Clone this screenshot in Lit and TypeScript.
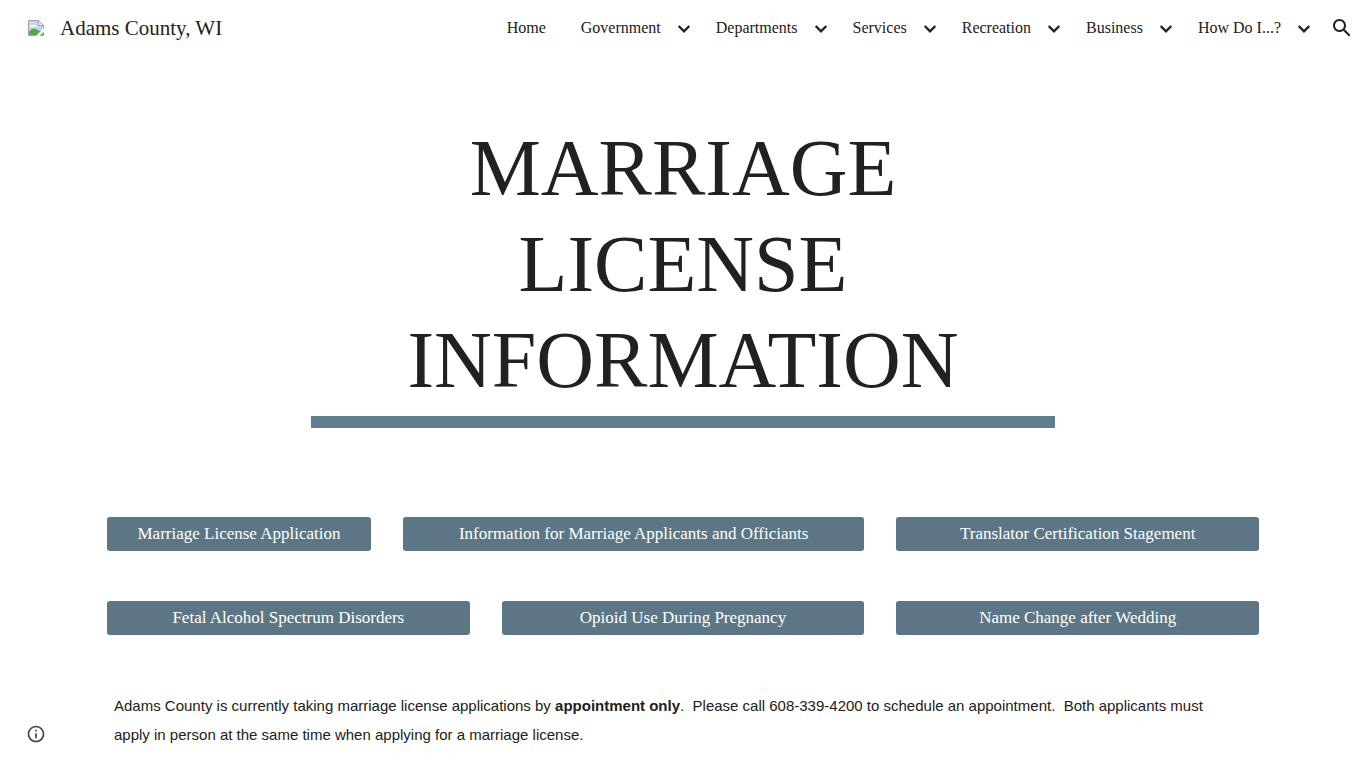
import { LitElement, html, css, svg } from "lit";
import { customElement } from "lit/decorators.js";
import { classMap } from "lit/directives/class-map.js";

interface NavItem {
  label: string;
  menu: boolean;
}

interface Action {
  label: string;
  size: "small" | "medium" | "large";
}

const NAV: NavItem[] = [
  { label: "Home", menu: false },
  { label: "Government", menu: true },
  { label: "Departments", menu: true },
  { label: "Services", menu: true },
  { label: "Recreation", menu: true },
  { label: "Business", menu: true },
  { label: "How Do I...?", menu: true },
];

const ACTIONS: Action[] = [
  { label: "Marriage License Application", size: "small" },
  { label: "Information for Marriage Applicants and Officiants", size: "large" },
  { label: "Translator Certification Stagement", size: "medium" },
  { label: "Fetal Alcohol Spectrum Disorders", size: "medium" },
  { label: "Opioid Use During Pregnancy", size: "medium" },
  { label: "Name Change after Wedding", size: "medium" },
];

const chevron = svg`<path d="M6.700 10 12 15.300 17.300 10" fill="none" stroke="currentColor" stroke-width="2.4" />`;
const search = svg`<path fill="currentColor" d="M20.49 19l-5.73-5.73C15.53 12.2 16 10.91 16 9.5 16 5.91 13.09 3 9.5 3S3 5.91 3 9.5 5.91 16 9.5 16c1.41 0 2.7-.47 3.77-1.24L19 20.49 20.49 19zM5 9.5C5 7.01 7.01 5 9.5 5S14 7.01 14 9.5 11.99 14 9.5 14 5 11.99 5 9.5z" />`;
const info = svg`<path fill="currentColor" d="M11 17h2v-6h-2v6zm1-15C6.48 2 2 6.48 2 12s4.48 10 10 10 10-4.48 10-10S17.52 2 12 2zm0 18c-4.41 0-8-3.59-8-8s3.59-8 8-8 8 3.59 8 8-3.59 8-8 8zM11 9h2V7h-2v2z" />`;

@customElement("site-header")
export class SiteHeader extends LitElement {
  static styles = css`
    :host {
      display: block;
    }
    .bar {
      display: flex;
      align-items: center;
      justify-content: space-between;
      height: 56px;
      padding: 0 12px 0 28px;
    }
    .brand {
      display: flex;
      align-items: center;
      gap: 16px;
      color: #212121;
      font-size: 21px;
      line-height: 24px;
      text-decoration: none;
      white-space: nowrap;
    }
    .logo {
      display: block;
      width: 16px;
      height: 16px;
    }
    .nav,
    .list,
    .item {
      display: flex;
      align-items: center;
    }
    .nav {
      gap: 14px;
    }
    .list {
      gap: 20px;
      margin: 0;
      padding: 0;
      list-style: none;
    }
    .item {
      gap: 11px;
    }
    .plain {
      padding-right: 15px;
    }
    .link {
      color: #212121;
      font-size: 16px;
      line-height: 24px;
      text-decoration: none;
      white-space: nowrap;
    }
    .icon-button {
      display: block;
      width: 24px;
      height: 24px;
      padding: 0;
      border: 0;
      background: none;
      color: #212121;
      cursor: pointer;
    }
    .icon {
      display: block;
      width: 24px;
      height: 24px;
    }
  `;

  render() {
    return html`
      <header class="bar">
        <a class="brand" href="#">
          <svg class="logo" viewBox="0 0 16 16" aria-hidden="true">
            <path d="M.5.5h10l5 5v10H.5z" fill="#c6d5f3" />
            <path d="M2 7c0-2 2-2.500 3-1.500C6 4 8.500 4.500 8.500 7z" fill="#fff" />
            <path d="M1 15v-3c2-3.500 5-4.500 8-2.500l6 3V15z" fill="#58a84c" />
            <path d="M.5.5h10l5 5v10H.5z" fill="none" stroke="#a3a3a3" />
            <path d="M10.500.5v5h5z" fill="#f4f4f4" stroke="#a3a3a3" />
            <path d="M16 8v3.500L11.500 16H8z" fill="#fff" />
          </svg>
          <span>Adams County, WI</span>
        </a>
        <nav class="nav" aria-label="Site">
          <ul class="list">
            ${NAV.map(
              (n) => html`<li class=${classMap({ item: true, plain: !n.menu })}>
                <a class="link" href="#">${n.label}</a>
                ${n.menu
                  ? html`<button class="icon-button" aria-label="Expand ${n.label}">
                      <svg class="icon" viewBox="0 0 24 24">${chevron}</svg>
                    </button>`
                  : null}
              </li>`
            )}
          </ul>
          <button class="icon-button" aria-label="Open search bar">
            <svg class="icon" viewBox="0 0 24 24">${search}</svg>
          </button>
        </nav>
      </header>
    `;
  }
}

@customElement("app-root")
export class AppRoot extends LitElement {
  static styles = css`
    :host {
      display: block;
      background: #fff;
      color: #212121;
      font-family: "Liberation Serif", "Times New Roman", serif;
    }
    .hero {
      max-width: 744px;
      margin: 0 auto;
      padding: 64px 32px 0;
    }
    .title {
      margin: 0;
      padding: 0 80px 8px;
      font-size: 80px;
      font-weight: 400;
      line-height: 96px;
      text-align: center;
      text-transform: uppercase;
    }
    .rule {
      height: 12px;
      margin: 0;
      border: 0;
      background: #607d8b;
    }
    .content {
      max-width: 1152px;
      margin: 0 auto;
      padding: 89px 32px 24px;
    }
    .actions {
      display: grid;
      grid-template-columns: repeat(12, minmax(0, 1fr));
      gap: 50px 32px;
    }
    .action {
      padding: 5px 16px;
      border-radius: 3px;
      background: #5c7685;
      color: #fff;
      font-size: 17px;
      line-height: 24px;
      text-align: center;
      text-decoration: none;
    }
    .small {
      grid-column: span 3;
    }
    .medium {
      grid-column: span 4;
    }
    .large {
      grid-column: span 5;
    }
    .note {
      margin: 56px 0 0;
      padding: 0 24px 0 7px;
      font-family: "Liberation Sans", Arial, sans-serif;
      font-size: 15px;
      line-height: 29px;
    }
    .info {
      position: fixed;
      bottom: 24px;
      left: 26px;
      width: 20px;
      height: 20px;
      padding: 0;
      border: 0;
      background: none;
      color: #444;
      cursor: pointer;
    }
    .info-icon {
      display: block;
      width: 20px;
      height: 20px;
    }
  `;

  render() {
    return html`
      <site-header></site-header>
      <main>
        <section class="hero">
          <h1 class="title">Marriage License Information</h1>
          <hr class="rule" />
        </section>
        <section class="content">
          <div class="actions">
            ${ACTIONS.map(
              (a) => html`<a class=${classMap({ action: true, [a.size]: true })} href="#">${a.label}</a>`
            )}
          </div>
          <p class="note">
            Adams County is currently taking marriage license applications by
            <strong>appointment only</strong>.&nbsp; Please call 608-339-4200 to schedule an
            appointment.&nbsp; Both applicants must apply in person at the same time when applying for
            a marriage license.
          </p>
        </section>
      </main>
      <button class="info" aria-label="Site actions">
        <svg class="info-icon" viewBox="0 0 24 24">${info}</svg>
      </button>
    `;
  }
}
